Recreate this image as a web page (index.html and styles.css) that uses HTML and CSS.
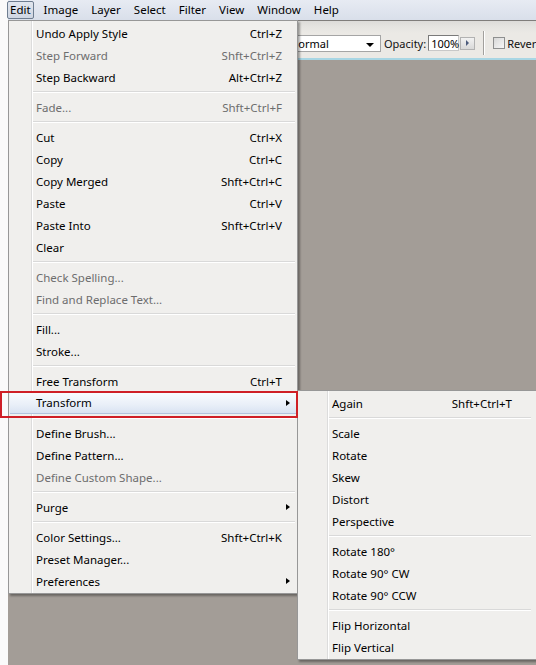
FILE: index.html
```html
<!DOCTYPE html>
<html>
<head>
<meta charset="utf-8">
<title>Edit menu</title>
<link rel="stylesheet" href="styles.css">
</head>
<body>
<div class="app">
  <div class="strip"></div>
  <div class="main">
    <nav class="menubar">
      <span class="mb-item active">Edit</span>
      <span class="mb-item">Image</span>
      <span class="mb-item">Layer</span>
      <span class="mb-item">Select</span>
      <span class="mb-item">Filter</span>
      <span class="mb-item">View</span>
      <span class="mb-item">Window</span>
      <span class="mb-item">Help</span>
    </nav>
    <div class="options">
      <div class="select"><span class="select-text">Normal</span><span class="dd-arrow"></span></div>
      <span class="opt-label">Opacity:</span>
      <span class="input">100%</span>
      <span class="spin"><span class="spin-arrow"></span></span>
      <span class="vsep"></span>
      <span class="checkbox"></span>
      <span class="opt-label check-label">Revers</span>
    </div>
    <div class="canvas"></div>
  </div>
</div>

<div class="menu main-menu">
  <div class="item"><span class="label">Undo Apply Style</span><span class="key">Ctrl+Z</span><span class="sub"></span></div>
  <div class="item disabled"><span class="label">Step Forward</span><span class="key">Shft+Ctrl+Z</span><span class="sub"></span></div>
  <div class="item"><span class="label">Step Backward</span><span class="key">Alt+Ctrl+Z</span><span class="sub"></span></div>
  <div class="sep"></div>
  <div class="item disabled"><span class="label">Fade...</span><span class="key">Shft+Ctrl+F</span><span class="sub"></span></div>
  <div class="sep"></div>
  <div class="item"><span class="label">Cut</span><span class="key">Ctrl+X</span><span class="sub"></span></div>
  <div class="item"><span class="label">Copy</span><span class="key">Ctrl+C</span><span class="sub"></span></div>
  <div class="item"><span class="label">Copy Merged</span><span class="key">Shft+Ctrl+C</span><span class="sub"></span></div>
  <div class="item"><span class="label">Paste</span><span class="key">Ctrl+V</span><span class="sub"></span></div>
  <div class="item"><span class="label">Paste Into</span><span class="key">Shft+Ctrl+V</span><span class="sub"></span></div>
  <div class="item"><span class="label">Clear</span><span class="key"></span><span class="sub"></span></div>
  <div class="sep"></div>
  <div class="item disabled"><span class="label">Check Spelling...</span><span class="key"></span><span class="sub"></span></div>
  <div class="item disabled"><span class="label">Find and Replace Text...</span><span class="key"></span><span class="sub"></span></div>
  <div class="sep"></div>
  <div class="item"><span class="label">Fill...</span><span class="key"></span><span class="sub"></span></div>
  <div class="item"><span class="label">Stroke...</span><span class="key"></span><span class="sub"></span></div>
  <div class="sep"></div>
  <div class="item"><span class="label">Free Transform</span><span class="key">Ctrl+T</span><span class="sub"></span></div>
  <div class="item hot has-sub"><span class="label">Transform</span><span class="key"></span><span class="sub"></span></div>
  <div class="sep"></div>
  <div class="item"><span class="label">Define Brush...</span><span class="key"></span><span class="sub"></span></div>
  <div class="item"><span class="label">Define Pattern...</span><span class="key"></span><span class="sub"></span></div>
  <div class="item disabled"><span class="label">Define Custom Shape...</span><span class="key"></span><span class="sub"></span></div>
  <div class="sep"></div>
  <div class="item has-sub"><span class="label">Purge</span><span class="key"></span><span class="sub"></span></div>
  <div class="sep"></div>
  <div class="item"><span class="label">Color Settings...</span><span class="key">Shft+Ctrl+K</span><span class="sub"></span></div>
  <div class="item"><span class="label">Preset Manager...</span><span class="key"></span><span class="sub"></span></div>
  <div class="item has-sub"><span class="label">Preferences</span><span class="key"></span><span class="sub"></span></div>
</div>

<div class="menu sub-menu">
  <div class="item"><span class="label">Again</span><span class="key">Shft+Ctrl+T</span><span class="sub"></span></div>
  <div class="sep"></div>
  <div class="item"><span class="label">Scale</span><span class="key"></span><span class="sub"></span></div>
  <div class="item"><span class="label">Rotate</span><span class="key"></span><span class="sub"></span></div>
  <div class="item"><span class="label">Skew</span><span class="key"></span><span class="sub"></span></div>
  <div class="item"><span class="label">Distort</span><span class="key"></span><span class="sub"></span></div>
  <div class="item"><span class="label">Perspective</span><span class="key"></span><span class="sub"></span></div>
  <div class="sep"></div>
  <div class="item"><span class="label">Rotate 180°</span><span class="key"></span><span class="sub"></span></div>
  <div class="item"><span class="label">Rotate 90° CW</span><span class="key"></span><span class="sub"></span></div>
  <div class="item"><span class="label">Rotate 90° CCW</span><span class="key"></span><span class="sub"></span></div>
  <div class="sep"></div>
  <div class="item"><span class="label">Flip Horizontal</span><span class="key"></span><span class="sub"></span></div>
  <div class="item"><span class="label">Flip Vertical</span><span class="key"></span><span class="sub"></span></div>
</div>

<div class="callout"></div>
</body>
</html>
```

FILE: styles.css
```css
* { box-sizing: border-box; }

html, body {
  margin: 0;
  padding: 0;
}

body {
  width: 536px;
  height: 665px;
  overflow: hidden;
  position: relative;
  font-family: "Noto Sans", "Open Sans", "Segoe UI", sans-serif;
  font-size: 11.5px;
  color: #000;
  background: #a39d97;
}

.app {
  display: flex;
  height: 665px;
}

.strip {
  width: 8px;
  flex: none;
  background: #fafafa;
}

.main {
  flex: 1;
  display: flex;
  flex-direction: column;
  min-width: 0;
}

/* Menu bar */
.menubar {
  height: 21px;
  flex: none;
  display: flex;
  align-items: center;
  gap: 7px;
  background: linear-gradient(#e7ebf3, #d9dfea);
  border-bottom: 1px solid #7f7d7b;
  white-space: nowrap;
}

.mb-item {
  height: 18px;
  line-height: 16px;
  padding: 0 2px;
  border: 1px solid transparent;
  border-radius: 2px;
}

.mb-item.active {
  margin-left: -1px;
  border-color: #6e7d90;
  background: linear-gradient(#e1e6ee, #cfd6e2);
}

/* Options bar */
.options {
  height: 39px;
  flex: none;
  display: flex;
  align-items: center;
  padding: 7px 0 0 281px;
  background: linear-gradient(#dcdbd9 0, #e5e4e1 6px, #ebe9e5 12px, #ebe9e5 100%);
  border-bottom: 2px solid #a8d6e4;
  font-size: 11px;
  white-space: nowrap;
  overflow: hidden;
}

.select {
  width: 92px;
  height: 17px;
  flex: none;
  display: flex;
  align-items: center;
  justify-content: space-between;
  padding: 0 6px 0 0;
  background: #fff;
  border: 1px solid #a5a5a5;
}

.dd-arrow {
  width: 0;
  height: 0;
  margin-top: 3px;
  border-left: 4px solid transparent;
  border-right: 4px solid transparent;
  border-top: 4px solid #000;
}

.opt-label {
  margin-left: 3px;
  color: #111;
}

.input {
  width: 31px;
  height: 16px;
  margin-left: 2px;
  flex: none;
  display: flex;
  align-items: center;
  padding-left: 2px;
  background: #fff;
  border: 1px solid #7a7a7a;
  border-right-color: #c8c8c8;
  border-bottom-color: #c8c8c8;
  font-size: 11px;
}

.spin {
  width: 15px;
  height: 13px;
  margin-left: 1px;
  flex: none;
  display: flex;
  align-items: center;
  justify-content: center;
  background: linear-gradient(#f2f2f2, #d9d9d9);
  border: 1px solid #b2b2b2;
}

.spin-arrow {
  width: 0;
  height: 0;
  border-top: 3px solid transparent;
  border-bottom: 3px solid transparent;
  border-left: 3px solid #4d5c7d;
}

.vsep {
  width: 2px;
  height: 24px;
  margin: 0 8px;
  flex: none;
  border-left: 1px solid #a2a09d;
  border-right: 1px solid #fff;
}

.checkbox {
  width: 12px;
  height: 12px;
  flex: none;
  border: 1px solid #8e8f8f;
  background: linear-gradient(135deg, #d8d8d8, #f7f7f7);
}

.check-label {
  margin-left: 2px;
}

.canvas {
  flex: 1;
  background: #a39d97;
}

/* Drop-down menus */
.menu {
  position: absolute;
  padding: 1px;
  background-color: #f0efed;
  background-repeat: no-repeat;
  border: 1px solid #979797;
  box-shadow: 2px 2px 2px rgba(0, 0, 0, 0.35);
  white-space: nowrap;
}

.main-menu {
  left: 8px;
  top: 20px;
  width: 290px;
  z-index: 2;
  background-image: linear-gradient(to right, transparent 22px, #dcdcdc 22px, #dcdcdc 23px, #fff 23px, #fff 24px, transparent 24px);
}

.sub-menu {
  left: 297px;
  top: 390px;
  width: 240px;
  z-index: 3;
  background-image: linear-gradient(to right, transparent 29px, #dcdcdc 29px, #dcdcdc 30px, #fff 30px, #fff 31px, transparent 31px);
}

.item {
  height: 22px;
  display: flex;
  align-items: center;
  padding-left: 26px;
}

.sub-menu .item {
  padding-left: 33px;
  padding-right: 9px;
}

.item .label {
  flex: 1;
}

.item .sub {
  width: 14px;
  flex: none;
  display: flex;
  align-items: center;
  padding-left: 4px;
}

.has-sub .sub::before {
  content: "";
  width: 0;
  height: 0;
  border-top: 3.5px solid transparent;
  border-bottom: 3.5px solid transparent;
  border-left: 4px solid #000;
}

.item.disabled {
  color: #6d6d6d;
}

.item.hot {
  background: linear-gradient(#fafcfe, #e9eff8 60%, #d9e3f2);
  border-bottom: 1px solid #b3c3de;
}

.sep {
  height: 0;
  margin: 3px 1px 3px 23px;
  border-top: 1px solid #d9d9d9;
  border-bottom: 1px solid #fff;
}

.sub-menu .sep {
  margin-left: 30px;
  margin-right: 4px;
}

/* Red annotation box */
.callout {
  position: absolute;
  left: 0;
  top: 391px;
  width: 298px;
  height: 27px;
  border: 2px solid #cf1f26;
  z-index: 4;
}
```
